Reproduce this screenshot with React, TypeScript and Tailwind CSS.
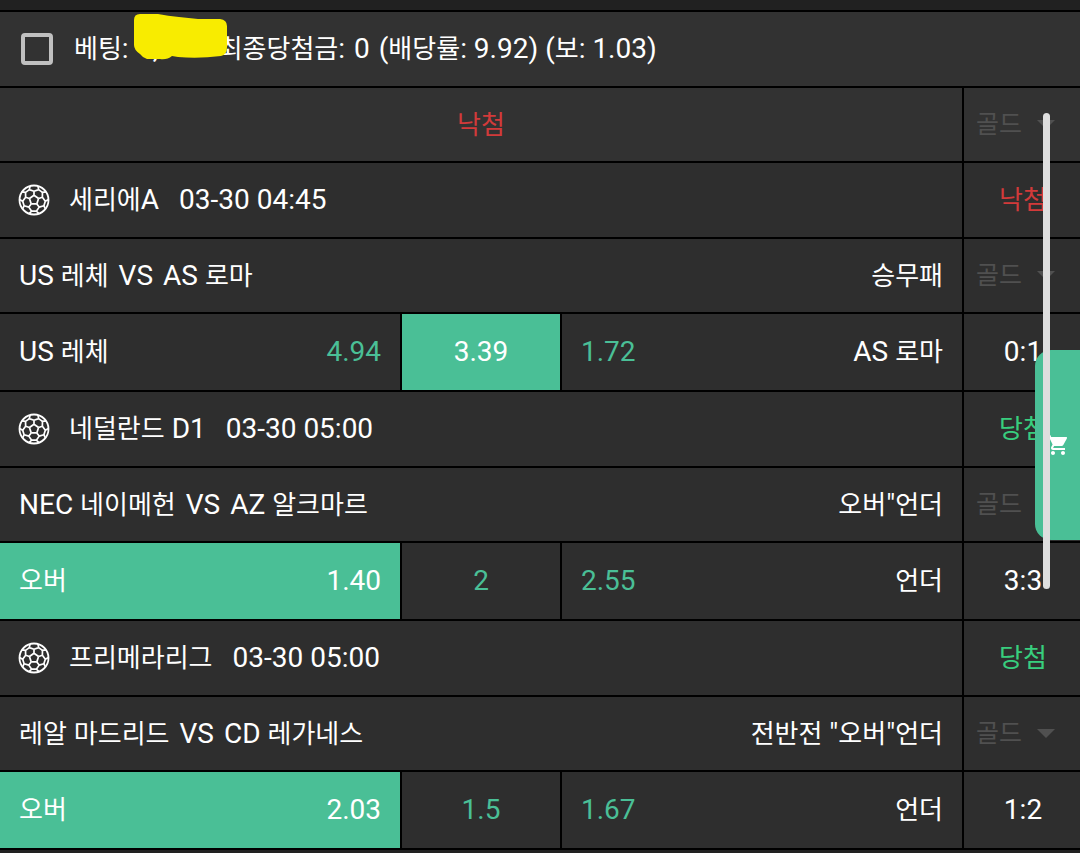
import { MdShoppingCart } from 'react-icons/md';
import clsx from 'clsx';


interface IPick {
    label?: string;
    odds: string;
    picked?: boolean;
}

interface IMatch {
    id: number;
    league: string;
    time: string;
    teams: [string, string];
    market: string;
    win: boolean;
    score: string;
    home: IPick;
    draw: IPick;
    away: IPick;
}

const matches: IMatch[] = [
    {
        id: 1, league: "세리에A", time: "03-30 04:45", teams: ["US 레체", "AS 로마"], market: "승무패", win: false, score: "0:1",
        home: { label: "US 레체", odds: "4.94" }, draw: { odds: "3.39", picked: true }, away: { label: "AS 로마", odds: "1.72" }
    },
    {
        id: 2, league: "네덜란드 D1", time: "03-30 05:00", teams: ["NEC 네이메헌", "AZ 알크마르"], market: '오버"언더', win: true, score: "3:3",
        home: { label: "오버", odds: "1.40", picked: true }, draw: { odds: "2" }, away: { label: "언더", odds: "2.55" }
    },
    {
        id: 3, league: "프리메라리그", time: "03-30 05:00", teams: ["레알 마드리드", "CD 레가네스"], market: '전반전 "오버"언더', win: true, score: "1:2",
        home: { label: "오버", odds: "2.03", picked: true }, draw: { odds: "1.5" }, away: { label: "언더", odds: "1.67" }
    },
];

const cell = "border-b-2 border-black p-0 font-normal";
const split = "border-r-2";
const pair = "flex justify-between px-[19px]";


// hangul is set a little smaller than latin and digits
const Label = ({ text }: { text: string }) => (
    <span className="whitespace-pre">
        {text.split(/([가-힣]+)/).map((part, i) =>
            i % 2 ? <span key={i} className="text-[26px]">{part}</span> : part
        )}
    </span>
);

const point = (deg: number, r: number) => {
    const a = (deg - 90) * Math.PI / 180;
    return `${(16 + r * Math.cos(a)).toFixed(2)} ${(16 + r * Math.sin(a)).toFixed(2)}`;
};

const Ball = () => {
    const corners = [0, 72, 144, 216, 288];
    return (
        <svg viewBox="0 0 32 32" className="size-8 shrink-0" fill="none" stroke="white" strokeWidth="1.7" strokeLinejoin="round" aria-hidden="true">
            <circle cx="16" cy="16" r="14.5" strokeWidth="1.8" />
            {corners.map(a => (
                <path
                    key={a}
                    d={`M${point(a, 4.8)}L${point(a + 72, 4.8)}M${point(a, 4.8)}L${point(a, 8.8)}M${point(a - 16, 14.4)}L${point(a - 24, 11.4)}L${point(a, 8.8)}L${point(a + 24, 11.4)}L${point(a + 16, 14.4)}M${point(a + 24, 11.4)}L${point(a + 48, 11.4)}`}
                />
            ))}
        </svg>
    );
};

const GoldSelect = ({ name }: { name: string }) => (
    <label className="flex items-center justify-between pl-3 pr-[25px] text-[#505050]">
        <select aria-label={name} className="w-12 appearance-none bg-transparent text-[25px] outline-none">
            <option>골드</option>
        </select>
        <svg viewBox="0 0 18 9" className="h-[9px] w-[18px] shrink-0" fill="currentColor" aria-hidden="true">
            <path d="M0 0H18L9 9Z" />
        </svg>
    </label>
);

const MatchRows = ({ match }: { match: IMatch }) => {
    const { home, draw, away } = match;
    return (
        <tbody className="bg-[#2e2e2e]">
            <tr className="h-[76px]">
                <th colSpan={3} scope="rowgroup" className={clsx(cell, split, "text-left")}>
                    <div className="flex items-center pl-[18px]">
                        <Ball />
                        <span className="ml-[19px]"><Label text={match.league} /></span>
                        <span className="ml-5">{match.time}</span>
                    </div>
                </th>
                <td className={clsx(cell, "pl-[2px] text-center", match.win ? "text-[#38ce7e]" : "text-[#d23a3a]")}>
                    <Label text={match.win ? "당첨" : "낙첨"} />
                </td>
            </tr>
            <tr className="h-[75px]">
                <td colSpan={3} className={clsx(cell, split)}>
                    <div className={pair}>
                        <div className="flex gap-[10px]">
                            <Label text={match.teams[0]} />
                            <span>VS</span>
                            <Label text={match.teams[1]} />
                        </div>
                        <Label text={match.market} />
                    </div>
                </td>
                <td className={cell}><GoldSelect name={match.teams.join(" VS ")} /></td>
            </tr>
            <tr className="h-[78px]">
                <td className={clsx(cell, split, home.picked && "bg-[#4abf96]")}>
                    <div className={pair}>
                        <Label text={home.label!} />
                        <span className={home.picked ? "" : "text-[#4abf96]"}>{home.odds}</span>
                    </div>
                </td>
                <td className={clsx(cell, split, "text-center", draw.picked ? "bg-[#4abf96]" : "text-[#4abf96]")}>{draw.odds}</td>
                <td className={clsx(cell, split)}>
                    <div className={pair}>
                        <span className="text-[#4abf96]">{away.odds}</span>
                        <Label text={away.label!} />
                    </div>
                </td>
                <td className={clsx(cell, "pl-[2px] text-center")}>{match.score}</td>
            </tr>
        </tbody>
    );
};

const App = () => {
    return (
        <main className="relative min-h-screen overflow-hidden bg-[#212121] pt-[10px] font-['Roboto','Noto_Sans_CJK_KR',sans-serif] text-[28px] leading-9 text-white">
            <header className="flex h-[78px] items-center border-y-2 border-black bg-[#323232] pl-[21px]">
                <input id="bet" type="checkbox" className="size-8 shrink-0 appearance-none rounded-[4px] border-4 border-[#c0c0c0] checked:bg-[#4abf96]" />
                <label htmlFor="bet" className="flex pl-[21px]">
                    <Label text="베팅:" />
                    <span className="relative w-[90px] pl-6">
                        ,
                        <svg viewBox="0 0 96 48" className="absolute -top-[18px] left-1 h-12 w-24" fill="#f8ec00" aria-hidden="true">
                            <path d="M1 7Q1 1 7 1L25 1Q35 3 46 4L65 6L87 6Q94 7 94 13L94 34Q94 42 88 43Q65 46 45 44L39 43Q34 47 27 46L14 46Q9 44 7 41Q1 37 1 32Z" />
                        </svg>
                    </span>
                    <span className="flex gap-[9px]">
                        <Label text="최종당첨금:" />
                        <span>0</span>
                        <Label text="(배당률: 9.92) (보: 1.03)" />
                    </span>
                </label>
            </header>
            <table className="w-full table-fixed border-separate border-spacing-0">
                <colgroup>
                    <col />
                    <col className="w-[160px]" />
                    <col />
                    <col className="w-[116px]" />
                </colgroup>
                <thead className="bg-[#323232]">
                    <tr className="h-[75px]">
                        <th colSpan={3} className={clsx(cell, split, "text-center text-[#d23a3a]")}><Label text="낙첨" /></th>
                        <td className={cell}><GoldSelect name="전체" /></td>
                    </tr>
                </thead>
                {matches.map(match => <MatchRows key={match.id} match={match} />)}
            </table>
            <button aria-label="장바구니" className="absolute right-0 top-[350px] flex h-[190px] w-[45px] items-center justify-center rounded-l-2xl bg-[#4abf96]">
                <MdShoppingCart className="size-6" />
            </button>
            <div className="absolute right-[30px] top-[113px] h-[476px] w-[7px] rounded-full bg-[#dedede]" />
        </main>
    );
};

export default App;
